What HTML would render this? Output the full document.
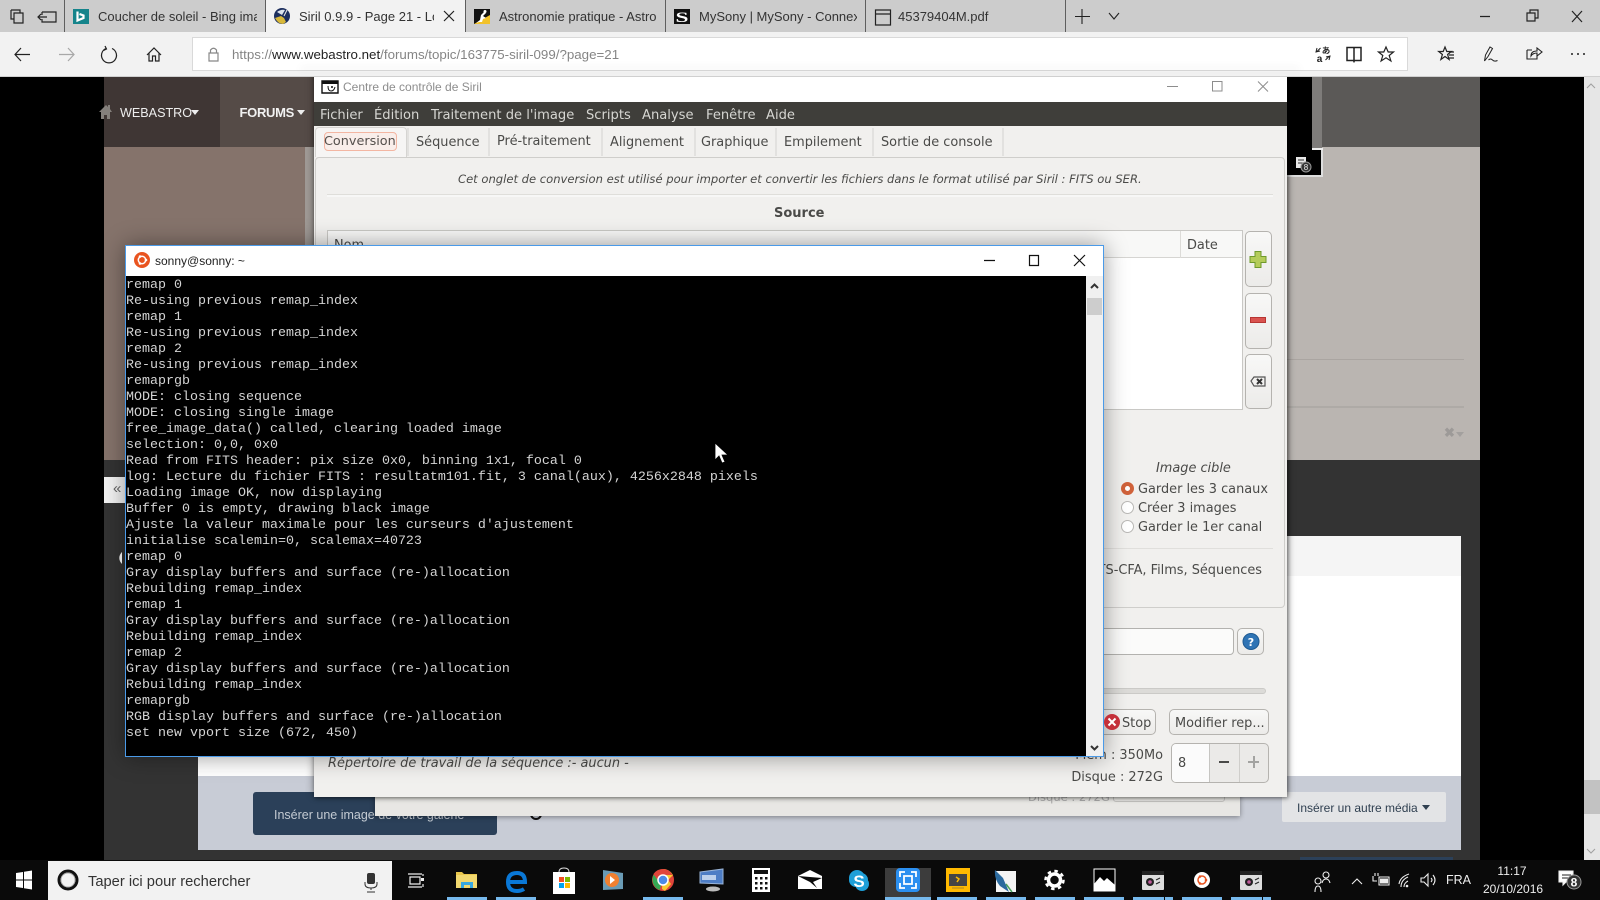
<!DOCTYPE html>
<html lang="fr"><head><meta charset="utf-8"><title>Siril</title>
<style>
html,body{margin:0;padding:0;width:1600px;height:900px;overflow:hidden;background:#000}
div,span,pre{box-sizing:border-box}
.a{position:absolute}
.t{position:absolute;white-space:nowrap;height:20px;line-height:20px;font-family:"Liberation Sans",sans-serif}
.s{font-family:"DejaVu Sans",sans-serif;font-size:12.9px;color:#4a4a48}
.m{color:#d6d6d2;font-size:13.1px;font-family:"DejaVu Sans",sans-serif}
.tab{font-size:13px;color:#333}
.sep{position:absolute;width:1px;background:#5e5e5e;top:0;height:32px}
.tsep{position:absolute;width:2px;background:#e2e1df;top:128px;height:28px}
.btn{position:absolute;border:1px solid #b5b3af;border-radius:5px;background:linear-gradient(#f8f8f7,#ecebe9)}
.ul{position:absolute;top:897px;height:3px;background:#76b9ed}
</style></head>
<body>
<!-- Page behind -->
<div class="a" style="left:0;top:0;width:1600px;height:900px;background:#000"></div>
<div class="a" style="left:1584px;top:77px;width:16px;height:783px;background:#e6e6e6"></div>
<div class="a" style="left:1584px;top:780px;width:16px;height:34px;background:#c2c2c2"></div>
<div class="a" style="left:104px;top:460px;width:1376px;height:400px;background:#333"></div>
<div class="a" style="left:104px;top:77px;width:116px;height:70px;background:#3f3634"></div>
<div class="a" style="left:220px;top:77px;width:95px;height:70px;background:#554b47"></div>
<div class="a" style="left:1287px;top:77px;width:193px;height:70px;background:#5b5957"></div>
<div class="a" style="left:104px;top:147px;width:201px;height:313px;background:#85736b"></div>
<div class="a" style="left:305px;top:147px;width:10px;height:313px;background:#a09a96"></div>
<div class="a" style="left:1287px;top:147px;width:193px;height:313px;background:#bab5b1"></div>
<div class="a" style="left:1286px;top:359px;width:178px;height:1px;background:#aaa5a1"></div>
<div class="a" style="left:1286px;top:406px;width:178px;height:2px;background:#aeaaa6"></div>
<div class="t" style="left:1444px;top:423px;font-size:13px;font-weight:bold;color:#9d9a98">✖</div>
<div class="a" style="left:1456px;top:432px;border:4px solid transparent;border-top:5px solid #a3a09e"></div>
<div class="a" style="left:1287px;top:77px;width:25px;height:73px;background:#000"></div>
<div class="a" style="left:1312px;top:77px;width:10px;height:71px;background:#7e7c7a"></div>
<div class="a" style="left:1312px;top:148px;width:11px;height:3px;background:#eee"></div>
<div class="a" style="left:1287px;top:150px;width:36px;height:27px;background:#000;border-right:2px solid #ddd;border-bottom:2px solid #ddd"></div>
<div class="t" style="left:120px;top:103px;font-size:12.6px;color:#eee">WEBASTRO</div>
<div class="a" style="left:191px;top:110px;border:4px solid transparent;border-top:5px solid #eee"></div>
<div class="t" style="left:239.500px;top:103px;font-size:13px;font-weight:bold;color:#f2f2f2;letter-spacing:-.3px">FORUMS</div>
<div class="a" style="left:297px;top:110px;border:4px solid transparent;border-top:5px solid #eee"></div>
<div class="a" style="left:104px;top:477px;width:22px;height:26px;background:#f3f3f3"></div>
<div class="t" style="left:113px;top:479px;font-size:15px;color:#666">«</div>
<div class="a" style="left:198px;top:536px;width:1263px;height:40px;background:#f5f5f5"></div>
<div class="a" style="left:198px;top:576px;width:1263px;height:200px;background:#fff"></div>
<div class="a" style="left:198px;top:776px;width:1263px;height:74px;background:#c8ccd6"></div>
<div class="a" style="left:253px;top:792px;width:244px;height:43px;background:#2b4059;border-radius:3px"></div>
<div class="t" style="left:274px;top:805px;font-size:12.5px;color:#c3cad2">Insérer une image de votre galerie</div>
<div class="a" style="left:530px;top:808px;width:12px;height:12px;border:2px solid #111;border-radius:50%"></div>
<div class="a" style="left:1282px;top:792px;width:164px;height:30px;background:#e3e4e6;border-radius:2px"></div>
<div class="t" style="left:1297px;top:798px;font-size:12px;color:#2f3f50">Insérer un autre média</div>
<div class="a" style="left:1422px;top:805px;border:4px solid transparent;border-top:5px solid #2f3f50"></div>
<div class="a" style="left:1300px;top:857px;width:153px;height:3px;background:#2b4059"></div>
<!-- ghost window -->
<div class="a" style="left:375px;top:700px;width:865px;height:116px;background:#e8e7e4;box-shadow:0 1px 5px rgba(0,0,0,.4)"></div>
<div class="t s" style="left:1028px;top:787px;color:#aaa;font-size:11.5px">Disque : 272G</div>
<div class="a" style="left:1113px;top:790px;width:112px;height:12px;border:1px solid #c4c3c0;border-radius:3px"></div>

<!-- Siril window -->
<div class="a" style="left:314px;top:72px;width:973px;height:725px;background:#f1f0ee;box-shadow:0 -2px 8px rgba(0,0,0,.45),1px 1px 4px rgba(0,0,0,.45)"></div>
<div class="a" style="left:314px;top:72px;width:973px;height:30px;background:#fff"></div>
<div class="t" style="left:343px;top:77px;font-size:12px;color:#8d8d8d">Centre de contrôle de Siril</div>
<div class="a" style="left:314px;top:102px;width:973px;height:24px;background:#3f3e3a"></div>
<div class="t m" style="left:320px;top:106px">Fichier</div>
<div class="t m" style="left:374px;top:106px">Édition</div>
<div class="t m" style="left:431px;top:106px">Traitement de l'image</div>
<div class="t m" style="left:586px;top:106px">Scripts</div>
<div class="t m" style="left:642px;top:106px">Analyse</div>
<div class="t m" style="left:706px;top:106px">Fenêtre</div>
<div class="t m" style="left:766px;top:106px">Aide</div>
<!-- tabs -->
<div class="a" style="left:315px;top:127px;width:92px;height:30px;background:#f6f5f4;border:1px solid #d5d4d1;border-bottom:0;border-radius:4px 4px 0 0"></div>
<div class="a" style="left:324px;top:132px;width:73px;height:19px;border:1px solid #f3b6a2;border-radius:4px;background:#f9eeea"></div>
<div class="t s" style="left:324px;top:132px;color:#55504d;font-size:12.8px">Conversion</div>
<div class="t s" style="left:416px;top:132.500px">Séquence</div>
<div class="t s" style="left:497px;top:131.500px">Pré-traitement</div>
<div class="t s" style="left:610px;top:132.500px">Alignement</div>
<div class="t s" style="left:701px;top:132.500px">Graphique</div>
<div class="t s" style="left:784px;top:132.500px">Empilement</div>
<div class="t s" style="left:881px;top:132.500px">Sortie de console</div>
<div class="tsep" style="left:407px"></div><div class="tsep" style="left:488px"></div><div class="tsep" style="left:601px"></div><div class="tsep" style="left:694px"></div><div class="tsep" style="left:775px"></div><div class="tsep" style="left:872px"></div><div class="tsep" style="left:1002px"></div>
<div class="a" style="left:315px;top:157px;width:970px;height:451px;border:1px solid #cfcecb;border-radius:4px;background:#f1f0ee"></div>
<div class="t s" style="left:458px;top:168.500px;font-style:italic;font-size:11.57px">Cet onglet de conversion est utilisé pour importer et convertir les fichiers dans le format utilisé par Siril : FITS ou SER.</div>
<div class="a" style="left:327px;top:194px;width:946px;height:1px;background:#dfdeda"></div>
<div class="a" style="left:327px;top:195px;width:946px;height:2px;background:#f7f7f6"></div>
<div class="t s" style="left:774px;top:204px;font-weight:bold;font-size:13px">Source</div>
<!-- table -->
<div class="a" style="left:327px;top:230px;width:916px;height:180px;background:#fff;border:1px solid #c9c8c5"></div>
<div class="a" style="left:328px;top:231px;width:914px;height:27px;background:#f8f8f7;border-bottom:1px solid #d6d5d2"></div>
<div class="a" style="left:1180px;top:231px;width:1px;height:27px;background:#dcdbd8"></div>
<div class="t s" style="left:334px;top:236px">Nom</div>
<div class="t s" style="left:1187px;top:236px">Date</div>
<div class="btn" style="left:1245px;top:231px;width:27px;height:56px"></div>
<div class="btn" style="left:1245px;top:293px;width:27px;height:56px"></div>
<div class="btn" style="left:1245px;top:354px;width:27px;height:55px"></div>
<!-- image cible -->
<div class="t s" style="left:1156px;top:459px;font-style:italic">Image cible</div>
<div class="t s" style="left:1138px;top:480px">Garder les 3 canaux</div>
<div class="t s" style="left:1138px;top:499px">Créer 3 images</div>
<div class="t s" style="left:1138px;top:518px">Garder le 1er canal</div>
<div class="a" style="left:1120.500px;top:482px;width:13px;height:13px;border-radius:50%;background:#fff;border:4px solid #d0623a"></div>
<div class="a" style="left:1120.500px;top:501px;width:13px;height:13px;border-radius:50%;background:#fff;border:1px solid #b9b8b5"></div>
<div class="a" style="left:1120.500px;top:520px;width:13px;height:13px;border-radius:50%;background:#fff;border:1px solid #b9b8b5"></div>
<div class="a" style="left:327px;top:548px;width:946px;height:1px;background:#e0dfdc"></div>
<div class="t s" style="right:338px;top:561px">FITS-CFA, Films, Séquences</div>
<!-- input -->
<div class="a" style="left:900px;top:628px;width:334px;height:27px;background:#fbfbfa;border:1px solid #b3b2af;border-radius:4px"></div>
<div class="btn" style="left:1237px;top:628px;width:27px;height:27px"></div>
<div class="a" style="left:900px;top:688px;width:366px;height:6px;background:#dcdbd8;border:1px solid #cbcac7;border-radius:3px"></div>
<div class="btn" style="left:1040px;top:709px;width:116px;height:26px"></div>
<div class="t s" style="left:1122px;top:714px">Stop</div>
<div class="btn" style="left:1169px;top:709px;width:100px;height:26px"></div>
<div class="t s" style="left:1175px;top:714px">Modifier rep...</div>
<div class="a" style="left:1171px;top:743px;width:98px;height:40px;border:1px solid #b5b3af;border-radius:5px;background:#ebeae8"></div>
<div class="a" style="left:1172px;top:744px;width:38px;height:38px;background:#fbfbfb;border-right:1px solid #c6c5c2;border-radius:4px 0 0 4px"></div>
<div class="a" style="left:1239px;top:744px;width:1px;height:38px;background:#cfcecb"></div>
<div class="t s" style="left:1178px;top:754px">8</div>
<div class="a" style="left:1219px;top:761px;width:10px;height:2px;background:#4a4a48"></div>
<div class="a" style="left:1248px;top:761px;width:11px;height:2px;background:#a3a3a1"></div>
<div class="a" style="left:1253px;top:756px;width:2px;height:12px;background:#a3a3a1"></div>
<div class="t s" style="right:437px;top:746px">Mém : 350Mo</div>
<div class="t s" style="right:437px;top:768px">Disque : 272G</div>
<div class="t s" style="left:328px;top:754px;font-style:italic">Répertoire de travail de la séquence :- aucun -</div>

<!-- Terminal -->
<div class="a" style="left:125px;top:245px;width:979px;height:512px;background:#fff;border:1px solid #4a9ae8;box-shadow:0 0 22px rgba(0,0,0,.4)"></div>
<div class="a" style="left:126px;top:276px;width:960px;height:480px;background:#000"></div>
<div class="a" style="left:1086px;top:276px;width:17px;height:480px;background:#f0f0f0"></div>
<div class="a" style="left:1087px;top:298px;width:15px;height:17px;background:#cdcdcd"></div>
<div class="t" style="left:155px;top:251px;font-size:12px;color:#222">sonny@sonny: ~</div>
<pre class="a" style="left:126px;top:278px;margin:0;font:13.33px/16px 'Liberation Mono','DejaVu Sans Mono',monospace;color:#d4d4d4">remap 0
Re-using previous remap_index
remap 1
Re-using previous remap_index
remap 2
Re-using previous remap_index
remaprgb
MODE: closing sequence
MODE: closing single image
free_image_data() called, clearing loaded image
selection: 0,0, 0x0
Read from FITS header: pix size 0x0, binning 1x1, focal 0
log: Lecture du fichier FITS : resultatm101.fit, 3 canal(aux), 4256x2848 pixels
Loading image OK, now displaying
Buffer 0 is empty, drawing black image
Ajuste la valeur maximale pour les curseurs d'ajustement
initialise scalemin=0, scalemax=40723
remap 0
Gray display buffers and surface (re-)allocation
Rebuilding remap_index
remap 1
Gray display buffers and surface (re-)allocation
Rebuilding remap_index
remap 2
Gray display buffers and surface (re-)allocation
Rebuilding remap_index
remaprgb
RGB display buffers and surface (re-)allocation
set new vport size (672, 450)</pre>

<!-- Browser chrome -->
<div class="a" style="left:0;top:0;width:1600px;height:32px;background:#ccc"></div>
<div class="a" style="left:265px;top:0;width:200px;height:32px;background:#f2f2f2"></div>
<div class="sep" style="left:64px"></div><div class="sep" style="left:265px"></div><div class="sep" style="left:465px"></div><div class="sep" style="left:665px"></div><div class="sep" style="left:865px"></div><div class="sep" style="left:1065px"></div>
<div class="t tab" style="left:98px;top:7px;width:159px;overflow:hidden">Coucher de soleil - Bing images</div>
<div class="t tab" style="left:299px;top:7px;width:135px;overflow:hidden">Siril 0.9.9 - Page 21 - Logiciels</div>
<div class="t tab" style="left:499px;top:7px;width:158px;overflow:hidden">Astronomie pratique - Astronomie</div>
<div class="t tab" style="left:699px;top:7px;width:158px;overflow:hidden">MySony | MySony - Connexion</div>
<div class="t tab" style="left:898px;top:7px">45379404M.pdf</div>
<div class="a" style="left:0;top:32px;width:1600px;height:44px;background:#f2f2f2"></div>
<div class="a" style="left:0;top:76px;width:1600px;height:1px;background:#d0d0d0"></div>
<div class="a" style="left:192px;top:37px;width:1216px;height:34px;background:#fff;border:1px solid #d9d9d9"></div>
<div class="a" style="left:300px;top:71px;width:1000px;height:1px;box-shadow:0 -3px 8px rgba(0,0,0,.18)"></div>
<div class="t" style="left:232px;top:45px;font-size:13.33px;color:#858585">https://<span style="color:#222">www.webastro.net</span>/forums/topic/163775-siril-099/?page=21</div>

<!-- Taskbar -->
<div class="a" style="left:0;top:860px;width:1600px;height:40px;background:#0a0a0a"></div>
<div class="a" style="left:48px;top:861px;width:344px;height:39px;background:#f2f2f2"></div>
<div class="t" style="left:88px;top:871.500px;font-size:14.7px;color:#333">Taper ici pour rechercher</div>
<div class="a" style="left:885px;top:868px;width:46px;height:32px;background:#3c3c3c"></div>
<div class="ul" style="left:447px;width:40px"></div><div class="ul" style="left:496px;width:40px"></div><div class="ul" style="left:643px;width:40px"></div><div class="ul" style="left:885px;width:46px"></div><div class="ul" style="left:937px;width:40px"></div><div class="ul" style="left:986px;width:40px"></div><div class="ul" style="left:1035px;width:40px"></div><div class="ul" style="left:1084px;width:40px"></div><div class="ul" style="left:1133px;width:40px"></div><div class="ul" style="left:1182px;width:40px"></div><div class="ul" style="left:1231px;width:40px"></div>
<div class="a" style="left:1164px;top:897px;width:1px;height:3px;background:#0a0a0a"></div><div class="a" style="left:1262px;top:897px;width:1px;height:3px;background:#0a0a0a"></div>
<div class="t" style="left:1446px;top:870px;font-size:12.5px;color:#eee">FRA</div>
<div class="t" style="left:1494px;top:861px;width:36px;text-align:center;font-size:12px;color:#eee">11:17</div>
<div class="t" style="left:1483px;top:879px;font-size:12px;color:#eee">20/10/2016</div>

<!-- Icons -->
<svg class="a" style="left:0;top:0" width="1600" height="900" viewBox="0 0 1600 900" fill="none">
<!-- tabbar -->
<g stroke="#222" stroke-width="1.2">
<path d="M11 10h9v3M11 10v9h3M14 13h9v10h-9z"/>
<path d="M42 12h14v10H42v-3M42 15v-3M38 17h9M41 14l-3 3 3 3"/>
<path d="M444 11l10 10M454 11l-10 10"/>
<path d="M875.500 10h15v15h-15zM875.500 14h15"/>
<path d="M1082 9v15M1075 16.500h15M1109 13l5 6 5-6" stroke-width="1.1"/>
<path d="M1480 16.500h10M1527 13h8v8h-8zM1530 13v-3h8v8h-3M1572 11l10 11M1582 11l-10 11"/>
</g>
<rect x="73" y="9" width="16" height="15" fill="#15848b"/><path d="M77.500 11.500v9l6-2.500v-2.500l-4-1.500" stroke="#fff" stroke-width="2.200" fill="none"/>
<circle cx="282" cy="16" r="8" fill="#1d2f5e"/><path d="M275 18l6-2 3 2 2 4-3 2q-5 0-8-6z" fill="#d8b83a"/><path d="M277 12q4-3 8-2l-3 5z" fill="#dde4ee"/><path d="M284 16l3-6" stroke="#eee"/>
<rect x="474" y="9" width="16" height="15" fill="#111"/><path d="M474 24l16-9v9z" fill="#f2c22a"/><path d="M476 23l4-3 1-5 3-3 2 1-3 3 3 2-3 1-1 3-3 0z" fill="#fff"/><circle cx="485" cy="11.500" r="1.500" fill="#fff"/>
<rect x="674" y="9" width="16" height="15" fill="#111"/><text x="682" y="22" text-anchor="middle" font-family="Liberation Serif" font-weight="bold" font-size="15" fill="#fff" textLength="13" lengthAdjust="spacingAndGlyphs">S</text>
<!-- toolbar -->
<g stroke="#222" stroke-width="1.2">
<path d="M15 54.500h15M21 48l-6 6.500 6 6.500"/>
<path d="M59 54.500h15M68 48l6 6.500-6 6.500" stroke="#a8a8a8"/>
<path d="M106 48.500a7.500 7.500 0 1 0 6 0M105 46l1.500 3-3 1.500"/>
<path d="M147 55l7-7 7 7M149 53v8h3.500v-5h3v5h3.500v-8"/>
<path d="M209 53h9v8h-9zM210.500 53v-3q3-3.500 6 0v3" stroke="#888"/>
<path d="M1347 47.500h6.500l.5 1 .5-1h6.500v13h-6.500l-.5 1-.5-1H1347zM1354 48.500v13" stroke-width="1.500"/>
<path d="M1386 47l2.200 5h5.300l-4.300 3.500 1.700 5.500-4.900-3.200-4.900 3.200 1.700-5.500-4.300-3.500h5.300z"/>
<path d="M1445 47l1.800 4.500h4.500l-3.700 3 1.500 5-4.100-3-4.100 3 1.500-5-3.700-3h4.500zM1449 52h5M1449 55h5M1449 58h5"/>
<path d="M1484.500 61l1-6 4.500-8 2.500 1.500-4.500 8zM1488.500 60q2-2 4 0t5 .5" stroke-width="1"/>
<path d="M1527 50h5M1527 50v9h10v-3M1531 56q0-5 6-5v-3l5 4-5 4v-3q-4 0-6 3z" stroke-width="1.100"/>
<path d="M1317 48l-1 4 4-1M1316.500 52l4-4M1329 60l1-4-4 1M1329.500 56l-4 4" stroke-width="1"/>
</g>
<text x="1326" y="53.500" text-anchor="middle" font-family="Noto Sans CJK JP, sans-serif" font-weight="bold" font-size="8.500" fill="#222">あ</text>
<text x="1319.500" y="62" text-anchor="middle" font-family="Liberation Sans" font-weight="bold" font-size="10" fill="#222">a</text>
<circle cx="1572" cy="54" r="1" fill="#222"/><circle cx="1578" cy="54" r="1" fill="#222"/><circle cx="1584" cy="54" r="1" fill="#222"/>
<!-- page nav / scrollbar -->
<path d="M99 112l7-7 2 2v-2h2v4l2 3h-2v7h-3v-4h-3v4h-3v-7z" fill="#85807c"/>
<path d="M1587 88l4-4 4 4M1587 849l4 4 4-4" stroke="#a0a0a0"/>
<path d="M1296 157h10v11h-6l-4 0z" fill="#e8e8e8"/><path d="M1298 160h6M1298 163h6" stroke="#333"/><circle cx="1306" cy="167" r="5" fill="#333" stroke="#999"/>
<text x="1306" y="170" text-anchor="middle" font-family="Liberation Sans" font-size="8" fill="#eee">8</text>
<path d="M122 552a8 8 0 0 0 0 12z" fill="#ddd"/>
<!-- Siril -->
<path d="M322 81h16v12h-16z" fill="#fff" stroke="#111" stroke-width="1.4"/><path d="M322 81h16v3h-16z" fill="#111"/><path d="M328 86q0 5 3 5t4-4" stroke="#111"/><circle cx="332" cy="87" r="1" fill="#111"/>
<g stroke="#8d8d8d" stroke-width="1"><path d="M1167 86.500h11M1212.500 81.500h9.500v9.500h-9.500zM1258 81.500l10 10M1268 81.500l-10 10"/></g>
<path d="M1255 251.500h6v5h5v6h-5v5h-6v-5h-5v-6h5z" fill="#b4cc5a" stroke="#6f9a2c"/>
<rect x="1250.500" y="317.500" width="15" height="5" fill="#d9534f" stroke="#b73532"/>
<path d="M1251 381l3-4h11v9h-11z" stroke="#555" stroke-width="1.2"/><path d="M1257 379l5 5M1262 379l-5 5" stroke="#333" stroke-width="2"/>
<circle cx="1251" cy="641.500" r="8" fill="#2f74b5" stroke="#1f5a92"/><text x="1251" y="646" text-anchor="middle" font-family="DejaVu Sans" font-weight="bold" font-size="11" fill="#fff">?</text>
<circle cx="1112" cy="722" r="8" fill="#c4303a"/><path d="M1108.500 718.500l7 7M1115.500 718.500l-7 7" stroke="#fff" stroke-width="2"/>
<!-- terminal -->
<circle cx="142" cy="260" r="8" fill="#e95420"/><circle cx="142" cy="260" r="3.700" stroke="#fff" stroke-width="1.5"/><circle cx="146" cy="260" r="1.300" fill="#fff"/><circle cx="140" cy="256.500" r="1.300" fill="#fff"/><circle cx="140" cy="263.500" r="1.300" fill="#fff"/>
<g stroke="#111" stroke-width="1.2"><path d="M984 260.500h11M1029.500 255.500h9v10h-9zM1074 255l11 11M1085 255l-11 11"/></g>
<path d="M1091 288l3.500-3.500 3.500 3.500M1091 746l3.500 3.500 3.500-3.500" stroke="#333" stroke-width="2"/>
<!-- cursor -->
<path d="M715 443v17l4-4 3 7 3-1-3-7h6z" fill="#fff" stroke="#000" stroke-width=".8"/>
<!-- taskbar -->
<path d="M16 873l7-1v7.500h-7zM24 871.800l8-1.300v9h-8zM16 880.500h7v7.500l-7-1zM24 880.500h8v9l-8-1.300z" fill="#fff"/>
<circle cx="68" cy="880" r="9" stroke="#111" stroke-width="3"/><circle cx="68" cy="880" r="7" stroke="#999" stroke-width=".7"/>
<rect x="367" y="873" width="8" height="11" rx="2" fill="#333"/><path d="M365 882v2q0 4 6 4t6-4v-2M371 888v2M367 892h8" stroke="#333"/>
<g stroke="#eee" stroke-width="1.2"><path d="M408 874h14M408 887h14M410 877h10v7h-10zM423 874v2M423 884v3"/></g><rect x="421" y="878" width="3" height="3" fill="#eee"/>
<path d="M456 872h6l2 2h13v6h-21z" fill="#e9c64b"/><path d="M456 875h21v13h-21z" fill="#f2d86f"/><path d="M461 888v-6h12v6z" fill="#37a7e0"/><path d="M464 888v-3h6v3z" fill="#f2d86f"/>
<path d="M508 882h17q0-9-8-9-9 0-9 9 0 9 9 9 4 0 7-2" stroke="#0a78d7" stroke-width="4"/>
<path d="M553 872h22v22h-22z" fill="#fff"/><path d="M559 872q0-4 5-4t5 4" stroke="#ddd"/><rect x="559" y="877" width="5" height="5" fill="#f25022"/><rect x="565" y="877" width="5" height="5" fill="#7fba00"/><rect x="559" y="883" width="5" height="5" fill="#00a4ef"/><rect x="565" y="883" width="5" height="5" fill="#ffb900"/>
<path d="M603 870l20 3v16l-20 1z" fill="#6a9bb5"/><circle cx="612" cy="880" r="7" fill="#f08030"/><path d="M610 876l5 4-5 4z" fill="#fff"/>
<circle cx="663" cy="880" r="11" fill="#e0453a"/><path d="M663 880l-9.500-5a11 11 0 0 0 6 15z" fill="#35a853"/><path d="M663 869a11 11 0 0 1 10 6l-5 5 3 4-6 7-3-2z" fill="#f9c92e"/><path d="M663 869q-6 0-9.500 5l4 6q2-5 5-5h10q-3-6-9.500-6z" fill="#e0453a"/><circle cx="663" cy="880" r="5" fill="#4c8ae6" stroke="#fff" stroke-width="1.500"/>
<path d="M700 872l23-3v15l-23-1z" fill="#4d7dc5" stroke="#9bb5d8"/><path d="M702 875h14v5h-14z" fill="#bcd0ec"/><ellipse cx="713" cy="889" rx="7" ry="2.500" fill="#bbb"/>
<rect x="752" y="868" width="18" height="24" fill="#fff"/><rect x="754" y="870" width="14" height="4" fill="#111"/><g fill="#111"><rect x="755" y="877" width="2.500" height="2.500"/><rect x="760" y="877" width="2.500" height="2.500"/><rect x="765" y="877" width="2.500" height="2.500"/><rect x="755" y="882" width="2.500" height="2.500"/><rect x="760" y="882" width="2.500" height="2.500"/><rect x="765" y="882" width="2.500" height="2.500"/><rect x="755" y="887" width="2.500" height="2.500"/><rect x="760" y="887" width="2.500" height="2.500"/><rect x="765" y="887" width="2.500" height="2.500"/></g>
<path d="M798 876l12-6 12 6v13h-24z" fill="#fff"/><path d="M798 876l24 2-9 4 4 6-7-6z" fill="#0a0a0a"/>
<circle cx="857" cy="878" r="8" fill="#1e9fd8"/><circle cx="862" cy="884" r="7" fill="#1e9fd8"/><rect x="849" y="873" width="19" height="14" rx="7" fill="#1e9fd8"/><text x="859" y="887" text-anchor="middle" font-family="Liberation Sans" font-weight="bold" font-size="17" fill="#fff">S</text>
<rect x="896" y="868" width="24" height="24" rx="4" fill="#2b8ff0"/><path d="M900 877v-5h5M916 877v-5h-5M900 883v5h5M916 883v5h-5M904 876h8v8h-8z" stroke="#fff" stroke-width="1.800"/>
<rect x="946" y="868" width="24" height="24" fill="#ffb900"/><rect x="949" y="874" width="18" height="12" fill="#444"/><path d="M956 877l3 2-2 3" stroke="#ffb900" stroke-width="1.500"/><path d="M952 888h12" stroke="#a8862a"/>
<rect x="996" y="871" width="20" height="21" fill="#f4f4f4"/><path d="M995 870l8 8 6 14-9-6q-6-7-5-16z" fill="#2b6a9e"/><path d="M1006 884l6 8" stroke="#4aa05a" stroke-width="1.500"/>
<circle cx="1054.500" cy="880" r="6" stroke="#fff" stroke-width="3.500"/><circle cx="1054.500" cy="880" r="9" stroke="#fff" stroke-width="2.500" stroke-dasharray="3.500 3.500"/>
<rect x="1094" y="869" width="21" height="22" fill="#000" stroke="#fff" stroke-width="1"/><path d="M1094 891v-7l6-7 4 4 3-3 8 7v6z" fill="#fff"/>
<rect x="1142" y="871" width="22" height="19" rx="1" fill="#ddd"/><rect x="1142" y="871" width="22" height="4" fill="#222"/><circle cx="1150" cy="882" r="4" fill="#222"/><circle cx="1150" cy="882" r="1.800" fill="#c05a9a"/><path d="M1156 880l4-2M1156 884l4-2" stroke="#222"/>
<rect x="1240" y="871" width="22" height="19" rx="1" fill="#ddd"/><rect x="1240" y="871" width="22" height="4" fill="#222"/><circle cx="1249" cy="882" r="4" fill="#222"/><circle cx="1249" cy="882" r="1.800" fill="#c05a9a"/><path d="M1255 880l4-2M1255 884l4-2" stroke="#222"/>
<circle cx="1202" cy="880" r="8" fill="#fff"/><circle cx="1202" cy="880" r="4" stroke="#e95420" stroke-width="1.500"/><circle cx="1206" cy="880" r="1.300" fill="#e95420"/><circle cx="1200" cy="876.500" r="1.300" fill="#e95420"/><circle cx="1200" cy="883.500" r="1.300" fill="#e95420"/>
<g stroke="#eee" stroke-width="1.1">
<circle cx="1318" cy="881" r="3"/><path d="M1315 892q0-6 3-6t3 6M1326 875m-3 0a3 3 0 1 0 6 0a3 3 0 1 0-6 0M1322 883q1-4 4-4t4 4"/>
<path d="M1352 884l5-5 5 5"/>
<path d="M1373 876v5h4M1375 873v3M1378 873v3M1379 877h10v8h-10z"/>
<path d="M1401 887q0-7 7-10M1404 887q0-4 4-6M1399 884q1-7 10-10"/>
<path d="M1421 878h3l4-4v12l-4-4h-3zM1431 878q2 2 0 4M1433 875q4 5 0 10"/>
<path d="M1559 871h14v11h-7l-3 3v-3h-4z" fill="#fff"/></g>
<rect x="1380" y="878.500" width="8" height="5" fill="#eee"/><circle cx="1407" cy="886" r="1.300" fill="#eee"/>
<path d="M1562 875h9M1562 878h9" stroke="#222"/>
<circle cx="1574" cy="882" r="7" fill="#333" stroke="#999"/><text x="1574" y="886.500" text-anchor="middle" font-family="Liberation Sans" font-weight="bold" font-size="12" fill="#fff">8</text>
</svg>
</body></html>
